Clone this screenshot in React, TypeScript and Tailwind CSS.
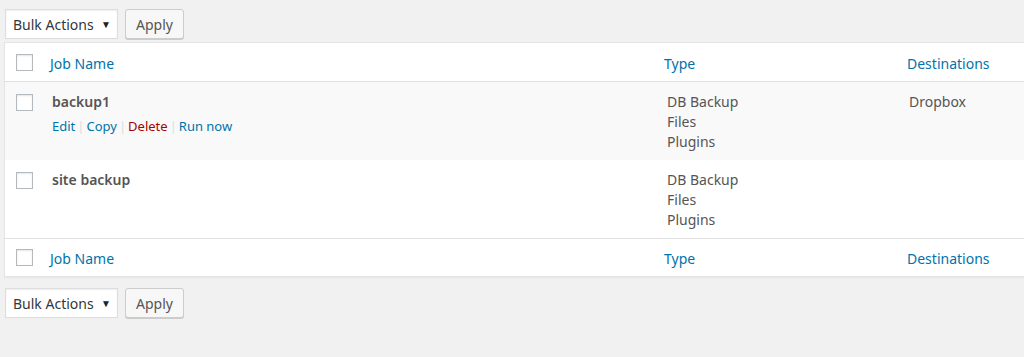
const JOBS = [
  { name: 'backup1', types: ['DB Backup', 'Files', 'Plugins'], dest: 'Dropbox', actions: true },
  { name: 'site backup', types: ['DB Backup', 'Files', 'Plugins'], dest: '', actions: false },
]

const Checkbox = () => (
  <span className="block w-[17px] h-[17px] bg-white border border-[#b4b9be] shadow-[inset_0_1px_2px_rgba(0,0,0,0.1)]" />
)

const BulkBar = () => (
  <div className="flex items-center gap-[7px] ml-[5px]">
    <div className="flex items-center justify-between w-[113px] h-[30px] pl-[7px] pr-[6px] bg-white border border-[#ddd] shadow-[inset_0_1px_2px_rgba(0,0,0,0.07)] text-[14px] text-[#32373c]">
      <span>Bulk Actions</span>
      <span className="text-[10px] text-[#222]">▼</span>
    </div>
    <div className="flex items-center justify-center w-[59px] h-[30px] bg-[#f7f7f7] border border-[#ccc] rounded-[3px] shadow-[0_1px_0_#ccc] text-[14px] text-[#555]">
      Apply
    </div>
  </div>
)

const Sep = () => <span className="text-[#ddd] mx-[2px]">|</span>

const HeadRow = ({ top }: { top?: boolean }) => (
  <div
    className={`grid grid-cols-[36px_613px_243px_1fr] items-center text-[14px] text-[#0073aa] ${
      top ? 'h-[39px] border-b border-[#e1e1e1]' : 'h-[38px] border-t border-[#e1e1e1]'
    }`}
  >
    <div className="pl-[11px]">
      <Checkbox />
    </div>
    <div className="pl-[9px] pt-[2px]">Job Name</div>
    <div className="pl-[10px] pt-[2px]">Type</div>
    <div className="pl-[10px] pt-[2px]">Destinations</div>
  </div>
)

export default function App() {
  return (
    <div className="w-[1024px] h-[357px] overflow-hidden bg-[#f1f1f1] pt-[9px] font-['Noto_Sans','Open_Sans',sans-serif]">
      <BulkBar />
      <div className="w-[1040px] ml-[4px] mt-[3px] bg-white border border-[#e5e5e5] shadow-[0_1px_1px_rgba(0,0,0,0.04)]">
        <HeadRow top />
        {JOBS.map((job, idx) => (
          <div
            key={job.name}
            className={`grid grid-cols-[36px_613px_243px_1fr] h-[78px] pt-[10px] text-[14px] text-[#555] ${
              idx % 2 === 0 ? 'bg-[#f9f9f9]' : 'bg-white'
            }`}
          >
            <div className="pl-[11px] pt-[2px]">
              <Checkbox />
            </div>
            <div className="pl-[11px]">
              <div className="font-semibold leading-[20px]">{job.name}</div>
              {job.actions && (
                <div className="mt-[4px] text-[13px] leading-[20px] flex items-center">
                  <span className="text-[#0073aa]">Edit</span>
                  <Sep />
                  <span className="text-[#0073aa]">Copy</span>
                  <Sep />
                  <span className="text-[#a00]">Delete</span>
                  <Sep />
                  <span className="text-[#0073aa]">Run now</span>
                </div>
              )}
            </div>
            <div className="pl-[13px] leading-[20px]">
              {job.types.map((t) => (
                <div key={t}>{t}</div>
              ))}
            </div>
            <div className="pl-[12px] leading-[20px]">{job.dest}</div>
          </div>
        ))}
        <HeadRow />
      </div>
      <div className="mt-[11px]">
        <BulkBar />
      </div>
    </div>
  )
}
